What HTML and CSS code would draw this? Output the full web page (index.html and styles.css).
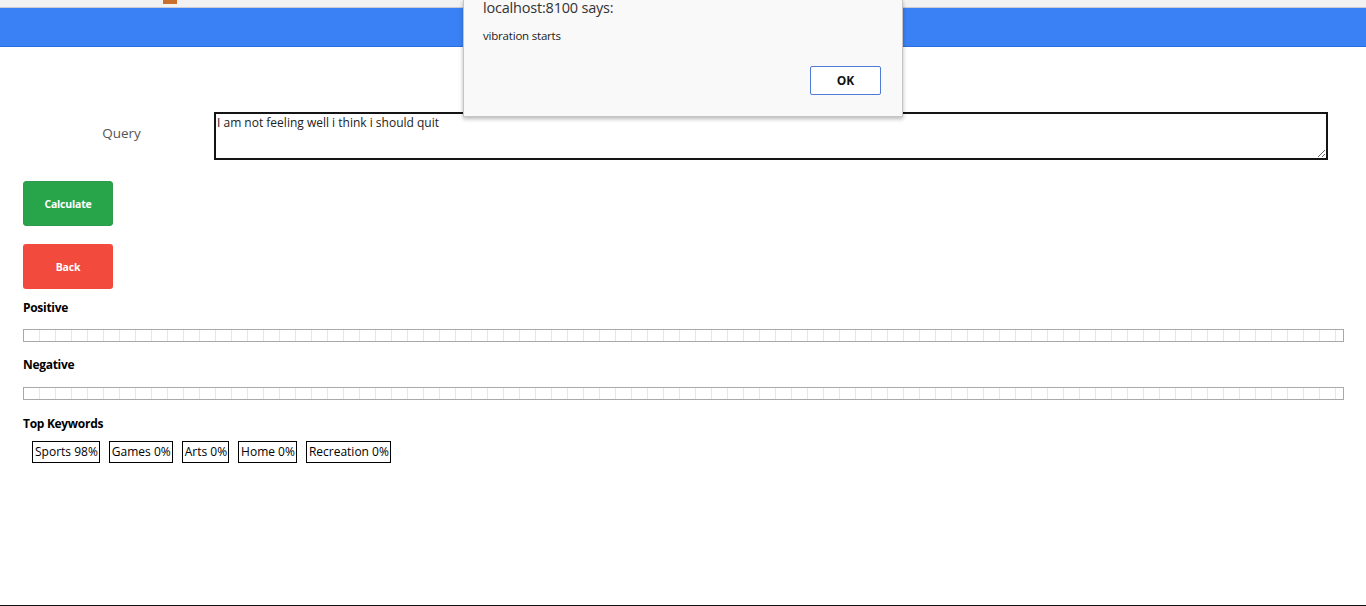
FILE: index.html
```html
<!DOCTYPE html>
<html lang="en">
<head>
<meta charset="utf-8">
<title>Sentiment</title>
<link rel="stylesheet" href="styles.css">
</head>
<body>
<div class="page">
  <div class="chrome-strip"><span class="tab-mark"></span></div>
  <header class="topbar"></header>
  <main class="content">
    <div class="query-row">
      <label class="query-label" for="q">Query</label>
      <textarea id="q" class="query-input">I am not feeling well i think i should quit</textarea>
    </div>
    <button class="btn btn-calc">Calculate</button>
    <button class="btn btn-back">Back</button>
    <div class="section-title title-positive">Positive</div>
    <div class="meter"></div>
    <div class="section-title title-negative">Negative</div>
    <div class="meter meter-neg"></div>
    <div class="section-title title-keywords">Top Keywords</div>
    <div class="chips">
      <span class="chip">Sports 98%</span>
      <span class="chip">Games 0%</span>
      <span class="chip">Arts 0%</span>
      <span class="chip">Home 0%</span>
      <span class="chip">Recreation 0%</span>
    </div>
  </main>
  <div class="bottom-edge"></div>
</div>
<div class="alert">
  <div class="alert-title">localhost:8100 says:</div>
  <div class="alert-msg">vibration starts</div>
  <div class="alert-actions"><button class="alert-ok">OK</button></div>
</div>
</body>
</html>
```
FILE: styles.css
```css
* { box-sizing: border-box; }
html, body { margin: 0; padding: 0; background: #fff; }
body {
  font-family: "Open Sans", "Noto Sans", "Liberation Sans", sans-serif;
  color: #000;
  overflow: hidden;
}
.page {
  height: 606px;
  display: flex;
  flex-direction: column;
}
.chrome-strip {
  height: 8px;
  background: #f2f2f2;
  border-bottom: 1px solid #c9cbd6;
}
.tab-mark {
  display: block;
  width: 14px;
  height: 4px;
  margin-left: 163px;
  background: #c8702c;
}
.topbar {
  height: 39px;
  background: #3a81f5;
  border-bottom: 1px solid #2a6ddc;
}
.content {
  padding: 0 22px 0 23px;
  display: flex;
  flex-direction: column;
  align-items: flex-start;
}
.query-row {
  margin-top: 65px;
  display: flex;
  align-items: flex-start;
  width: 100%;
}
.query-label {
  width: 191px;
  padding-left: 6px;
  text-align: center;
  font-size: 13.5px;
  color: #555;
  line-height: 20px;
  margin-top: 11px;
}
.query-input {
  width: 1114px;
  height: 48px;
  border: 2px solid #141414;
  padding: 1px 0 0 1px;
  font-family: "Open Sans", "Noto Sans", sans-serif;
  font-size: 12px;
  line-height: 16px;
  color: #222;
  resize: vertical;
  background: #fff;
}
.btn {
  width: 90px;
  height: 45px;
  border: none;
  border-radius: 3px;
  color: #fff;
  font-family: "Open Sans", "Noto Sans", sans-serif;
  font-weight: 700;
  font-size: 10.5px;
  letter-spacing: -0.2px;
  padding: 0;
}
.btn-calc {
  margin-top: 21px;
  background: #28a44b;
  border: 1px solid #2f9a4a;
}
.btn-back {
  margin-top: 18px;
  background: #f24a3d;
}
.section-title {
  font-weight: 700;
  font-size: 12px;
  line-height: 16px;
  letter-spacing: -0.3px;
}
.title-positive { margin-top: 11px; }
.title-negative { margin-top: 15px; }
.title-keywords { margin-top: 16px; }
.meter {
  margin-top: 13px;
  width: 1321px;
  height: 13px;
  border: 1px solid #a9a9a9;
  background: repeating-linear-gradient(to right, transparent 0 15px, #e6e6e6 15px 16px);
}
.meter-neg { margin-top: 14px; }
.chips {
  margin-top: 9px;
  padding-left: 9px;
  display: flex;
  gap: 9px;
}
.chip {
  display: inline-block;
  border: 1px solid #000;
  font-size: 12px;
  line-height: 20px;
  padding: 0 1px 0 2px;
}
.bottom-edge {
  margin-top: auto;
  height: 1px;
  background: #111;
}
.alert {
  position: absolute;
  left: 463px;
  top: 0;
  width: 440px;
  height: 117px;
  background: #f9f9f9;
  border: 1px solid #c5c5c5;
  border-top: none;
  box-shadow: 0 2px 4px rgba(0, 0, 0, 0.28);
  padding: 0 21px 0 19px;
  font-family: "Open Sans", "Noto Sans", sans-serif;
}
.alert-title {
  font-size: 14.5px;
  line-height: 18px;
  color: #333;
  margin-top: -1px;
  letter-spacing: -0.2px;
}
.alert-msg {
  font-size: 11.5px;
  line-height: 16px;
  color: #222;
  margin-top: 11px;
  letter-spacing: -0.2px;
}
.alert-actions {
  display: flex;
  justify-content: flex-end;
  margin-top: 22px;
}
.alert-ok {
  width: 71px;
  height: 29px;
  border: 1px solid #4d7bd6;
  border-radius: 2px;
  background: #fff;
  font-family: "Open Sans", "Noto Sans", sans-serif;
  font-weight: 700;
  font-size: 12px;
  color: #111;
  padding: 0;
}
```
